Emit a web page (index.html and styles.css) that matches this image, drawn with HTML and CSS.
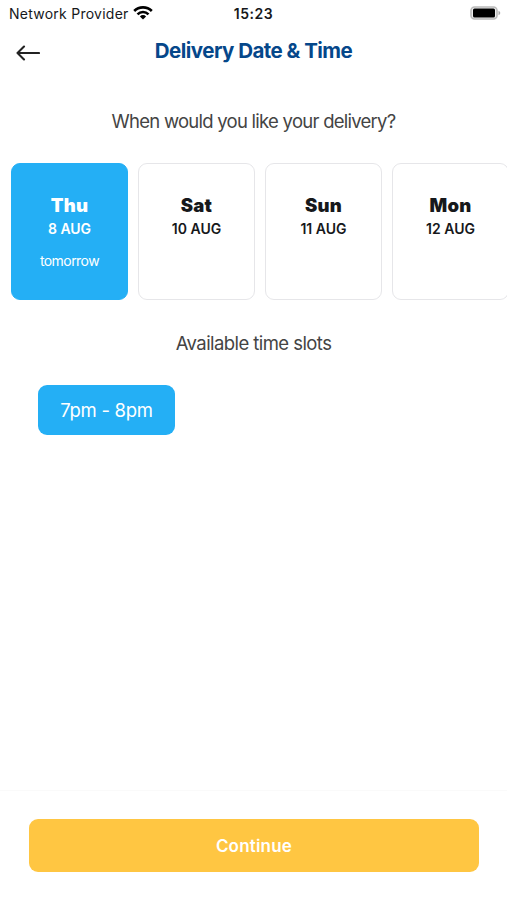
FILE: index.html
```html
<!DOCTYPE html>
<html lang="en">
<head>
<meta charset="utf-8">
<title>Delivery Date &amp; Time</title>
<link rel="stylesheet" href="styles.css">
</head>
<body>
<div class="status">
  <div class="network"><span class="provider">Network Provider</span>
    <svg class="wifi" width="20" height="14" viewBox="0 0 20 14" fill="none" stroke="#000" stroke-width="2.6"><path d="M1.2 5A12.4 12.4 0 0 1 18.8 5M4.5 8.3A7.8 7.8 0 0 1 15.5 8.3"/><path d="M10 13.5L6.9 10.4A4.4 4.4 0 0 1 13.1 10.4Z" fill="#000" stroke="none"/></svg>
  </div>
  <span class="clock">15:23</span>
  <svg class="battery" width="31" height="14" viewBox="0 0 31 14"><rect x="1" y="1" width="26" height="12" rx="3.5" fill="#eee" stroke="#bbb" stroke-width="1.6"/><rect x="3" y="2.5" width="22" height="9" rx="1.5"/><path d="M28.5 4.7q1.8.8 1.8 2.3t-1.8 2.3z" fill="#aaa"/></svg>
</div>
<header class="header">
  <svg class="back" width="24" height="18" viewBox="0 0 24 18" fill="none" stroke="#222" stroke-width="2.1" stroke-linecap="round" stroke-linejoin="round"><path d="M23 9H1.5M8 2.5L1.5 9 8 15.5"/></svg>
  <h1 class="title">Delivery Date &amp; Time</h1>
</header>
<main class="main">
  <h2 class="question"><span>When would you like your delivery?</span></h2>
  <div class="days">
    <div class="day selected"><b class="name">Thu</b><span class="date">8 AUG</span><span class="note">tomorrow</span></div>
    <div class="day"><b class="name">Sat</b><span class="date">10 AUG</span></div>
    <div class="day"><b class="name">Sun</b><span class="date">11 AUG</span></div>
    <div class="day"><b class="name">Mon</b><span class="date">12 AUG</span></div>
  </div>
  <h2 class="slots-title"><span>Available time slots</span></h2>
  <div class="slots"><button class="slot">7pm - 8pm</button></div>
</main>
<footer class="footer"><button class="continue">Continue</button></footer>
</body>
</html>
```

FILE: styles.css
```css
* { box-sizing: border-box; }
body { margin: 0; height: 900px; overflow: hidden; display: flex; flex-direction: column; background: #fff; font-family: Inter, sans-serif; color: #16181b; }
.status { height: 28px; display: grid; grid-template-columns: 1fr auto 1fr; align-items: center; padding: 0 6px 2px 9px; font-size: 14px; line-height: 18px; }
.network { display: flex; align-items: center; gap: 5px; }
.provider { letter-spacing: .25px; white-space: nowrap; padding-top: 2px; }
.wifi { margin-left: -1px; }
.clock { font-weight: 600; letter-spacing: .5px; padding-top: 2px; margin-right: 3px; }
.battery { justify-self: end; }
.header { height: 50px; display: grid; grid-template-columns: 24px 1fr 24px; padding: 0 16px; }
.back { margin-top: 16px; }
.title { margin: 10px 0 0; text-align: center; font-size: 20.5px; line-height: 26px; font-weight: 700; letter-spacing: -.53px; color: #05478a; }
.main { flex: 1; }
.question, .slots-title { margin: 0; text-align: center; font-size: 18.5px; line-height: 24px; font-weight: 400; color: #444; letter-spacing: -.57px; }
.question { margin-top: 31px; letter-spacing: -.74px; }
.days { display: flex; gap: 10px; margin: 30px 0 0 11px; overflow: hidden; }
.day { flex: 0 0 117px; height: 137px; border: 1px solid #e6e6e9; border-radius: 9px; display: flex; flex-direction: column; align-items: center; padding-top: 29px; }
.selected { background: #24aff5; border-color: #24aff5; color: #fff; }
.name { font-size: 18.5px; line-height: 24px; font-weight: 900; letter-spacing: .2px; }
.date { font-size: 14px; line-height: 22px; font-weight: 600; margin-top: 1px; }
.note { font-size: 14px; line-height: 18px; margin-top: 12px; letter-spacing: -.55px; }
.slots-title { margin-top: 31px; }
.slots { padding: 30px 38px; }
button { border: 0; font-family: inherit; color: #fff; padding: 0; }
.slot { width: 137px; height: 50px; border-radius: 9px; background: #24aff5; font-size: 18.5px; letter-spacing: -.3px; display: block; }
.footer { height: 110px; border-top: 1px solid #fafafa; padding: 28px 28px 0 29px; }
.continue { display: block; width: 100%; height: 53px; border-radius: 9px; background: #ffc642; font-size: 17px; font-weight: 600; letter-spacing: .2px; }
```
